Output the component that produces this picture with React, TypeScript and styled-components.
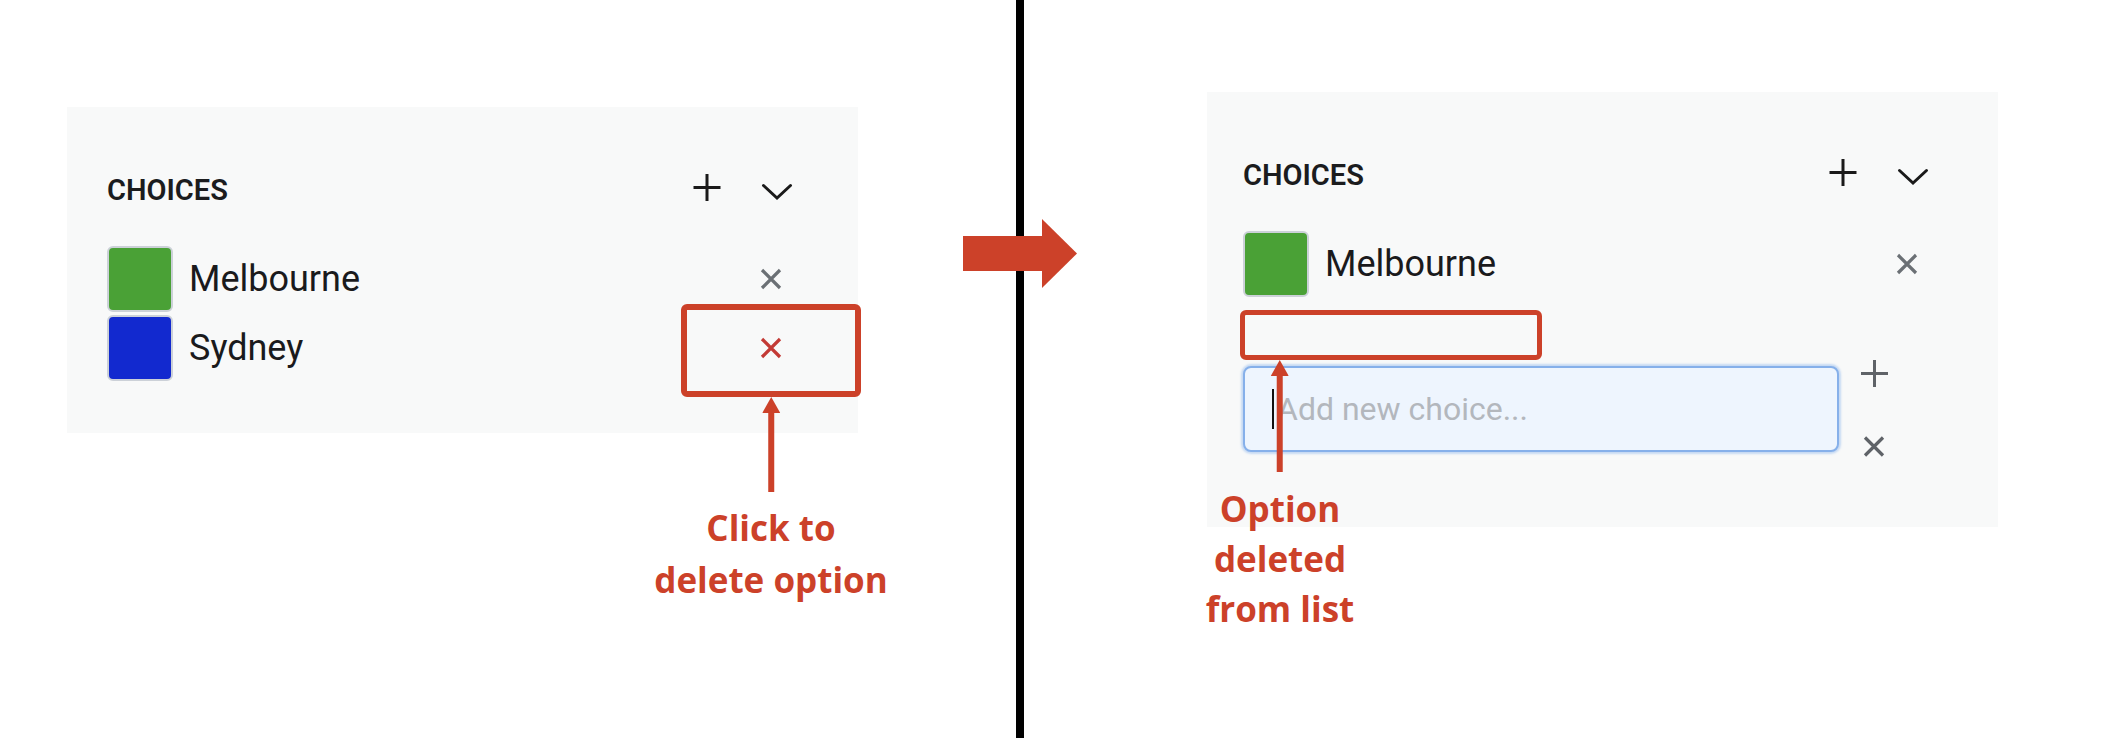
import styled, { createGlobalStyle } from "styled-components";

type Choice = {
  name: string;
  color: string;
};

const RED = "#cc4129";

const GlobalStyle = createGlobalStyle`
  body {
    margin: 0;
    background: #fff;
    font-family: Roboto, "Noto Sans", sans-serif;
  }
`;

const Page = styled.div`
  position: relative;
  display: flex;
  width: 2106px;
  height: 738px;
  overflow: hidden;
  background: #fff;
`;

const Half = styled.section<{ $width?: number; $padTop: number; $padLeft: number }>`
  ${({ $width }) => ($width ? `width: ${$width}px; flex: none;` : "flex: 1;")}
  box-sizing: border-box;
  padding: ${({ $padTop, $padLeft }) => `${$padTop}px 0 0 ${$padLeft}px`};
`;

const Divider = styled.div`
  flex: none;
  width: 8px;
  background: #000;
`;

const BigArrow = styled.svg`
  position: absolute;
  left: 963px;
  top: 219px;
`;

const Panel = styled.div<{ $inset: number; $padRight: number; $padBottom: number }>`
  width: 791px;
  box-sizing: border-box;
  padding: 63px ${({ $padRight }) => $padRight}px ${({ $padBottom }) => $padBottom}px
    ${({ $inset }) => $inset}px;
  background: #f8f9f9;
`;

const Header = styled.div`
  display: flex;
  align-items: center;
  justify-content: space-between;
  height: 40px;
  margin-bottom: 36px;
`;

const Title = styled.h3`
  margin: 0;
  font-family: Roboto, sans-serif;
  font-size: 29px;
  font-weight: 600;
  color: #1b1c1e;
  text-transform: uppercase;
`;

const HeaderActions = styled.div`
  display: flex;
  gap: 30px;
`;

const IconButton = styled.button<{ $color?: string }>`
  display: flex;
  align-items: center;
  justify-content: center;
  width: 40px;
  height: 40px;
  padding: 0;
  border: 0;
  background: none;
  color: ${({ $color }) => $color || "#1a1a1a"};
  cursor: pointer;
`;

const ChoiceList = styled.ul`
  display: flex;
  flex-direction: column;
  gap: 3px;
  margin: 0;
  padding: 0;
  list-style: none;
`;

const ChoiceRow = styled.li`
  display: flex;
  align-items: center;
  height: 66px;
`;

const EmptySlot = styled.li`
  position: relative;
  height: 66px;
`;

const Swatch = styled.span<{ $color: string }>`
  flex: none;
  width: 66px;
  height: 66px;
  box-sizing: border-box;
  border: 2px solid #ccd1d8;
  border-radius: 6px;
  background: ${({ $color }) => $color};
`;

const ChoiceName = styled.span`
  flex: 1;
  margin-left: 16px;
  font-family: Roboto, sans-serif;
  font-size: 36px;
  color: #1a1a1c;
`;

const DeleteCell = styled.div`
  position: relative;
  display: flex;
  align-items: center;
  justify-content: center;
  width: 50px;
  height: 66px;
  margin-right: 1px;
`;

const Highlight = styled.div<{ $left: number; $top: number; $width: number; $height: number; $border: number }>`
  position: absolute;
  left: ${({ $left }) => $left}px;
  top: ${({ $top }) => $top}px;
  width: ${({ $width }) => $width}px;
  height: ${({ $height }) => $height}px;
  box-sizing: border-box;
  border: ${({ $border }) => $border}px solid ${RED};
  border-radius: 6px;
  pointer-events: none;
`;

const Callout = styled.div<{ $top: number; $left: string }>`
  position: absolute;
  z-index: 2;
  top: ${({ $top }) => $top}px;
  left: ${({ $left }) => $left};
  display: flex;
  flex-direction: column;
  align-items: center;
  transform: translateX(-50%);
  pointer-events: none;
`;

const Caption = styled.p<{ $gap: number; $lineHeight: number }>`
  margin: ${({ $gap }) => $gap}px 0 0;
  font-family: "Open Sans", "Liberation Sans", sans-serif;
  font-size: 35px;
  font-weight: 700;
  line-height: ${({ $lineHeight }) => $lineHeight}px;
  color: ${RED};
  text-align: center;
  white-space: nowrap;
`;

const InputRow = styled.div`
  display: flex;
  align-items: flex-start;
`;

const InputWrap = styled.div`
  position: relative;
  flex: none;
`;

const ChoiceInput = styled.input`
  display: block;
  width: 596px;
  height: 86px;
  box-sizing: border-box;
  padding: 0 0 0 32px;
  border: 2px solid #86b0ea;
  border-radius: 8px;
  background: #eef5fe;
  box-shadow: 0 0 2px 2px rgba(140, 182, 238, 0.45);
  font-family: Roboto, sans-serif;
  font-size: 32px;
  color: #1d1d1f;
  outline: none;

  &::placeholder {
    color: #b3b7bd;
  }
`;

const Caret = styled.span`
  position: absolute;
  left: 29px;
  top: 23px;
  width: 2px;
  height: 40px;
  background: #111;
`;

const SideActions = styled.div`
  display: flex;
  flex-direction: column;
  align-items: center;
  justify-content: space-between;
  width: 50px;
  height: 97px;
  margin: -6px 0 -5px 10px;
`;

const SideButton = styled.button`
  display: flex;
  padding: 0;
  border: 0;
  background: none;
  color: #5f6368;
  cursor: pointer;
`;

const PlusIcon = () => (
  <svg width="40" height="40" viewBox="0 0 40 40">
    <path d="M6.5 17.5H33.5M20 4V31" stroke="currentColor" strokeWidth="3" fill="none" />
  </svg>
);

const ChevronIcon = () => (
  <svg width="40" height="40" viewBox="0 0 40 40">
    <path d="M6.5 15.5L20 28L33.5 15.5" stroke="currentColor" strokeWidth="3" fill="none" strokeLinecap="round" />
  </svg>
);

const CloseIcon = ({ color }: { color: string }) => (
  <svg width="40" height="40" viewBox="0 0 40 40">
    <path d="M11 11L29 29M29 11L11 29" stroke={color} strokeWidth="3.2" fill="none" />
  </svg>
);

const SmallPlus = () => (
  <svg width="27" height="27" viewBox="0 0 27 27">
    <path d="M0 13.5H27M13.5 0V27" stroke="currentColor" strokeWidth="3" fill="none" />
  </svg>
);

const SmallClose = () => (
  <svg width="22" height="21" viewBox="0 0 22 21">
    <path d="M2 1.5L20 19.5M20 1.5L2 19.5" stroke="currentColor" strokeWidth="3.2" fill="none" />
  </svg>
);

const UpArrow = ({ length }: { length: number }) => (
  <svg width="18" height={length} viewBox={`0 0 18 ${length}`}>
    <polygon points="9,0 18,16 0,16" fill={RED} />
    <rect x="6" y="15" width="6" height={length - 15} fill={RED} />
  </svg>
);

const ChoicesHeader = () => (
  <Header>
    <Title>Choices</Title>
    <HeaderActions>
      <IconButton aria-label="Add choice">
        <PlusIcon />
      </IconButton>
      <IconButton aria-label="Collapse">
        <ChevronIcon />
      </IconButton>
    </HeaderActions>
  </Header>
);

const before: Choice[] = [
  { name: "Melbourne", color: "#4aa136" },
  { name: "Sydney", color: "#1229cf" },
];

const after: Choice[] = [{ name: "Melbourne", color: "#4aa136" }];

const App = () => {
  return (
    <>
      <GlobalStyle />
      <Page>
        <Half $width={1016} $padTop={107} $padLeft={67}>
          <Panel $inset={40} $padRight={61} $padBottom={52}>
            <ChoicesHeader />
            <ChoiceList>
              {before.map(({ name, color }, index: number) => {
                const marked = name === "Sydney";
                return (
                  <ChoiceRow key={index}>
                    <Swatch $color={color} />
                    <ChoiceName>{name}</ChoiceName>
                    <DeleteCell>
                      <CloseIcon color={marked ? "#c33a35" : "#6b7075"} />
                      {marked && (
                        <>
                          <Highlight $left={-65} $top={-11} $width={180} $height={93} $border={6} />
                          <Callout $top={82} $left="50%">
                            <UpArrow length={95} />
                            <Caption $gap={10} $lineHeight={52}>
                              Click to
                              <br />
                              delete option
                            </Caption>
                          </Callout>
                        </>
                      )}
                    </DeleteCell>
                  </ChoiceRow>
                );
              })}
            </ChoiceList>
          </Panel>
        </Half>

        <Divider />

        <Half $padTop={92} $padLeft={183}>
          <Panel $inset={36} $padRight={65} $padBottom={75}>
            <ChoicesHeader />
            <ChoiceList>
              {after.map(({ name, color }, index: number) => (
                <ChoiceRow key={index}>
                  <Swatch $color={color} />
                  <ChoiceName>{name}</ChoiceName>
                  <DeleteCell>
                    <CloseIcon color="#6b7075" />
                  </DeleteCell>
                </ChoiceRow>
              ))}
              <EmptySlot>
                <Highlight $left={-3} $top={10} $width={302} $height={50} $border={5} />
                <Callout $top={60} $left="37px">
                  <UpArrow length={112} />
                  <Caption $gap={12} $lineHeight={50}>
                    Option
                    <br />
                    deleted
                    <br />
                    from list
                  </Caption>
                </Callout>
              </EmptySlot>
            </ChoiceList>
            <InputRow>
              <InputWrap>
                <ChoiceInput placeholder="Add new choice..." readOnly />
                <Caret />
              </InputWrap>
              <SideActions>
                <SideButton aria-label="Save choice">
                  <SmallPlus />
                </SideButton>
                <SideButton aria-label="Cancel">
                  <SmallClose />
                </SideButton>
              </SideActions>
            </InputRow>
          </Panel>
        </Half>

        <BigArrow width="114" height="69" viewBox="0 0 114 69">
          <rect x="0" y="17" width="80" height="35" fill={RED} />
          <polygon points="79,0 114,34.5 79,69" fill={RED} />
        </BigArrow>
      </Page>
    </>
  );
};

export default App;
